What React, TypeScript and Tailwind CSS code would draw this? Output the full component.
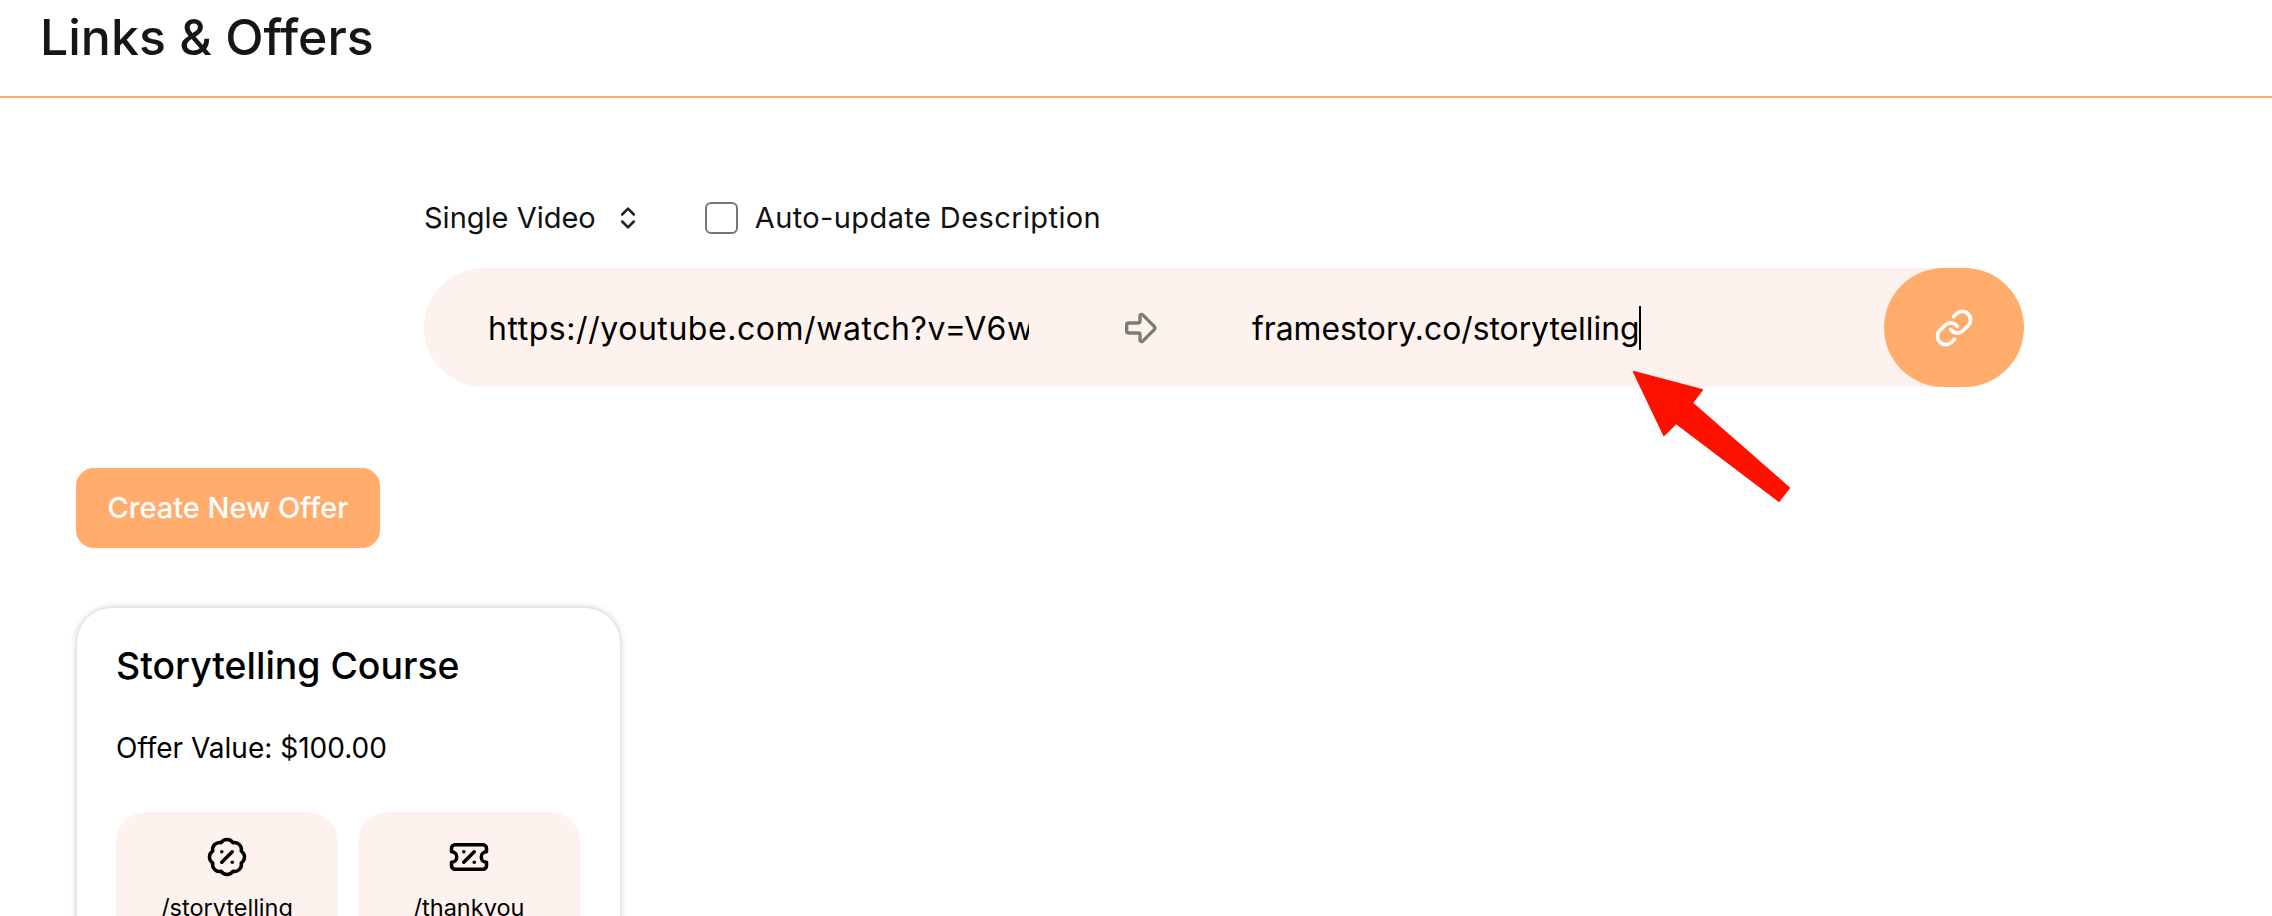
import React from 'react';
import { ArrowBigRight, BadgePercent, ChevronsUpDown, Link, TicketPercent } from 'lucide-react';

const LinkTile: React.FC<{ icon: React.ReactNode; label: string }> = ({ icon, label }) => (
  <div className="flex h-[140px] w-[222px] flex-col items-center rounded-t-[30px] bg-[#fdf2ed] pt-[24px]">
    {icon}
    <span className="mt-[14px] text-[23.5px] leading-[32px] text-black">{label}</span>
  </div>
);

export default function App() {
  return (
    <div className="relative h-[916px] w-[2272px] overflow-hidden bg-white font-['Inter','Liberation_Sans',sans-serif]">
      {/* Header */}
      <header className="flex h-[98px] items-start border-b-2 border-[#ffac6d] pl-[40px] pt-[10px]">
        <h1 className="text-[50px] font-medium leading-[54px] text-[#161616]">Links &amp; Offers</h1>
      </header>

      {/* Link builder */}
      <section className="ml-[424px] mt-[103px] w-[1600px]">
        <div className="flex h-[32px] items-center pt-[2px]">
          <span className="text-[29px] leading-[32px] text-[#111]">Single Video</span>
          <ChevronsUpDown size={28} strokeWidth={2.2} className="ml-[18px] text-[#222]" />
          <span className="ml-[63px] h-[32px] w-[33px] rounded-[6px] border-2 border-[#777]" />
          <span className="ml-[17px] text-[29px] leading-[32px] tracking-[0.4px] text-[#111]">Auto-update Description</span>
        </div>

        <div className="mt-[35px] flex h-[119px] items-center rounded-[60px] bg-[#fdf2ed]">
          <div className="ml-[64px] w-[541px] overflow-hidden whitespace-nowrap pt-[2px] text-[32px] tracking-[0.55px] text-black">
            https://youtube.com/watch?v=V6wkzLpQ2nE
          </div>
          <ArrowBigRight size={40} strokeWidth={2} className="ml-[91px] text-[#807a75]" />
          <div className="ml-[92px] flex items-center">
            <span className="whitespace-nowrap pt-[2px] text-[31.8px] text-black">framestory.co/storytelling</span>
            <span className="h-[44px] w-[2px] bg-black" />
          </div>
          <button className="ml-auto flex h-[119px] w-[140px] items-center justify-center rounded-[60px] bg-[#ffac6d]">
            <Link size={40} strokeWidth={2.2} className="text-white" />
          </button>
        </div>
      </section>

      {/* Offers */}
      <section className="ml-[76px] mt-[81px]">
        <button className="flex h-[80px] w-[304px] items-center justify-center rounded-[18px] bg-[#ffac6d] text-[29px] font-medium text-white">
          Create New Offer
        </button>

        <div className="mt-[59px] w-[545px] rounded-t-[36px] border border-[#e4e4e4] bg-white px-[39px] pb-[40px] pt-[36px] shadow-[0_0_6px_rgba(0,0,0,0.18)]">
          <h2 className="text-[37.4px] font-medium leading-[44px] text-black">Storytelling Course</h2>
          <p className="mt-[40px] text-[28px] leading-[40px] text-black">Offer Value: $100.00</p>
          <div className="mt-[44px] flex gap-[20px]">
            <LinkTile icon={<BadgePercent size={42} strokeWidth={2} className="text-black" />} label="/storytelling" />
            <LinkTile icon={<TicketPercent size={42} strokeWidth={2} className="text-black" />} label="/thankyou" />
          </div>
        </div>
      </section>

      {/* Annotation arrow */}
      <svg className="absolute left-0 top-0" width="2272" height="916" viewBox="0 0 2272 916" fill="none">
        <path
          d="M1634 372L1702 390L1692 403L1789 488L1779 501L1676 423L1664 435Z"
          fill="#ff1100"
          stroke="#ff1100"
          strokeWidth="2"
          strokeLinejoin="round"
        />
      </svg>
    </div>
  );
}
